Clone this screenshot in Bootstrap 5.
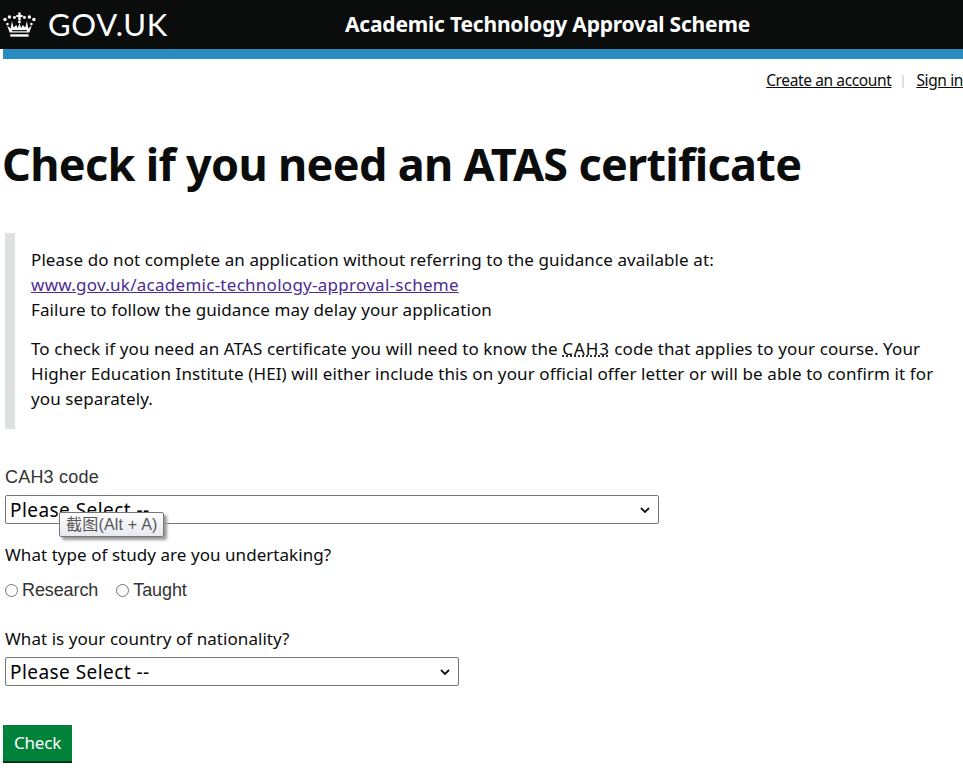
<!DOCTYPE html>
<html lang="en"><head><meta charset="utf-8"><title>Check if you need an ATAS certificate</title>
<link href="https://cdn.jsdelivr.net/npm/bootstrap@5.3.0/dist/css/bootstrap.min.css" rel="stylesheet">
<style>
html,body{overflow:hidden}
body{font-family:"Noto Sans","Liberation Sans",sans-serif;font-size:17px;line-height:25px;color:#0b0c0c;height:772px;position:relative}
.hdr{height:49px;background:#0b0c0c;color:#fff}
.logo{width:168px;padding-left:3px;gap:12px;font-family:Lato,sans-serif;font-size:31px;line-height:49px;letter-spacing:.75px}
.svc{font-weight:700;font-size:21px;letter-spacing:-.2px;padding-left:177px}
.stripe{height:10px;margin-left:3px;background:#2b8cc4}
.toplinks{height:42px;padding-top:9px;font-size:15.500px;letter-spacing:-.38px}
.toplinks a{color:#0b0c0c}
.sep{width:2px;height:13px;background:#dee0e2;margin:7px 12px 0 11px}
.ttl{margin:36px 0 0 2px;font-size:45px;line-height:54px;font-weight:700;letter-spacing:-.7px;color:#0b0c0c}
.inset{margin:42px 0 0 5px;height:196px;padding:14px 15px 0 16px;border-left:10px solid #dee0e2;letter-spacing:.1px}
.inset p{margin:0 0 14px}
.inset a{color:#4c2c92;letter-spacing:.27px}
abbr.cah{text-decoration:underline dotted;cursor:help;letter-spacing:.9px}
.frm{padding-left:5px;letter-spacing:.05px;margin-top:36px}
.lbl{display:block;margin:0}
.alt{font-family:"Liberation Sans",sans-serif;font-size:18px;letter-spacing:-.1px;color:#333}
.alt1{letter-spacing:.2px}
.sel{display:block;height:29px;border:1px solid #767676;border-radius:2px;color:#000;font-family:"Noto Sans",sans-serif;font-size:19px;padding:1px 0 0 4px;letter-spacing:.45px;appearance:none;background:#fff url("data:image/svg+xml,%3Csvg xmlns='http://www.w3.org/2000/svg' width='10' height='6'%3E%3Cpath d='M1 1l4 4 4-4' fill='none' stroke='%23111' stroke-width='1.800'/%3E%3C/svg%3E") no-repeat right 8px center}
.s1{width:654px;margin-top:5px}.s2{width:454px;margin-top:6px}
.q1{margin-top:4px;padding-top:14px}
.rad{gap:18px;margin-top:11px;height:25px}
.rad input{width:13px;height:13px;margin:0 4px 0 0;vertical-align:-1px;accent-color:#767676}
.q2{margin-top:23px}
.chk{display:block;margin:39px 0 0 3px;width:69px;height:38px;background:#00823b;color:#fff;border:0;border-bottom:2px solid #003618;border-radius:0;font-size:17px;padding:0;letter-spacing:-.2px}
.tip{left:59px;top:512px;height:25px;padding:0 5px 0 6px;background:linear-gradient(#fff,#e8e8f2);border:1px solid #767676;border-radius:2px;box-shadow:3px 3px 3px #999;font-family:"Liberation Sans","Noto Sans CJK SC",sans-serif;font-size:16px;letter-spacing:.2px;line-height:23px;color:#575757;white-space:nowrap}
</style></head><body>
<header class="hdr d-flex align-items-center">
<div class="logo d-flex align-items-center flex-shrink-0">
<svg width="34" height="27" viewBox="0 0 33 26" fill="#fff" aria-hidden="true"><path d="M15.300 1h2.400v2.400h2v2h-2v3.400h-2.400V5.400h-2v-2h2z"/><circle cx="2" cy="8" r="1.700"/><circle cx="6.500" cy="5.500" r="1.700"/><circle cx="11.500" cy="6" r="1.500"/><circle cx="21.500" cy="6" r="1.500"/><circle cx="26.500" cy="5.500" r="1.700"/><circle cx="31" cy="8" r="1.700"/><circle cx="4.500" cy="12.500" r="1.300"/><circle cx="28.500" cy="12.500" r="1.300"/><circle cx="16.500" cy="10.500" r="1.400"/><path d="M9 9.500l1.600 6.500 2.700-2.500 1.400 3 1.800-4.500 1.800 4.500 1.400-3 2.700 2.500L24 9.500l1.300 7.500 3.600-3-2.600 7H6.700l-2.600-7 3.600 3z"/><path d="M7.300 22.800h18.400v2.400H7.300z"/><path d="M9 18.600h15v1.200H9z" fill="#0b0c0c"/></svg>
<span>GOV.UK</span></div>
<div class="svc">Academic Technology Approval Scheme</div>
</header>
<div class="stripe"></div>
<nav class="toplinks d-flex justify-content-end"><a href="#">Create an account</a><span class="sep"></span><a href="#">Sign in</a></nav>
<h1 class="ttl">Check if you need an ATAS certificate</h1>
<div class="inset">
<p>Please do not complete an application without referring to the guidance available at:<br><a href="#">www.gov.uk/academic-technology-approval-scheme</a><br>Failure to follow the guidance may delay your application</p>
<p>To check if you need an ATAS certificate you will need to know the <abbr class="cah">CAH3</abbr> code that applies to your course. Your Higher Education Institute (HEI) will either include this on your official offer letter or will be able to confirm it for you separately.</p>
</div>
<form class="frm">
<label class="lbl alt alt1" for="a1">CAH3 code</label>
<select id="a1" class="sel s1"><option>Please Select --</option></select>
<div class="lbl q1">What type of study are you undertaking?</div>
<div class="rad d-flex alt"><label><input type="radio" name="t">Research</label><label><input type="radio" name="t">Taught</label></div>
<label class="lbl q2" for="a2">What is your country of nationality?</label>
<select id="a2" class="sel s2"><option>Please Select --</option></select>
</form>
<button class="chk btn" type="button">Check</button>
<div class="tip position-absolute">截图(Alt + A)</div>
</body></html>
